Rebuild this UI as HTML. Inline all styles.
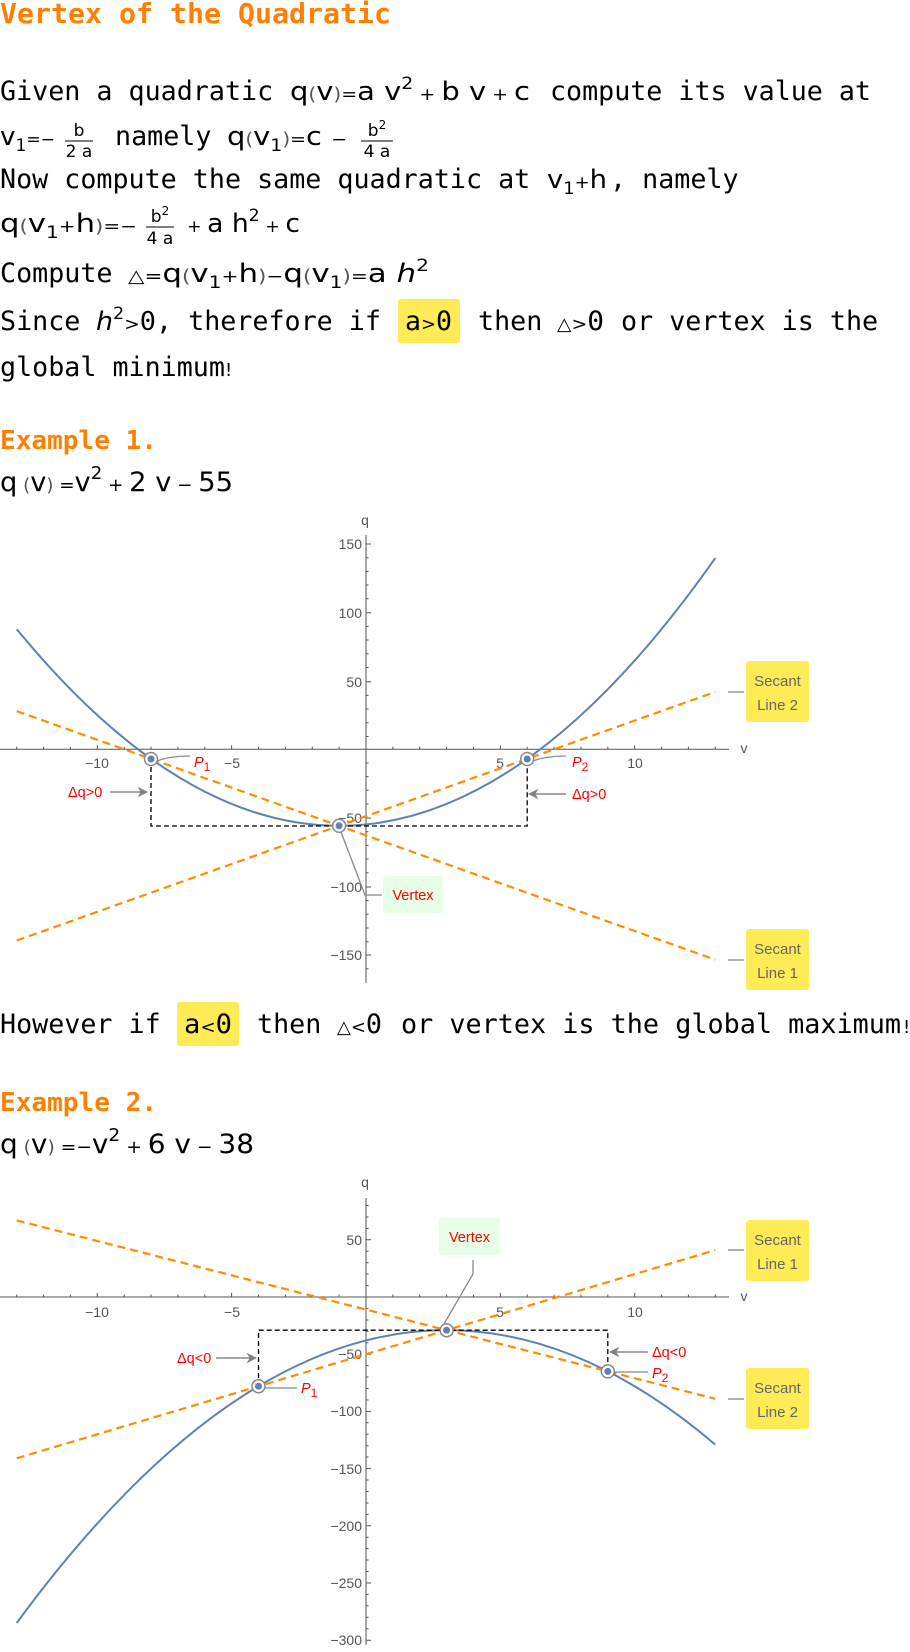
<!DOCTYPE html>
<html><head><meta charset="utf-8"><style>
html,body{margin:0;padding:0;background:#fff;width:910px;height:1652px;overflow:hidden}
svg{display:block}
.m{font-family:"DejaVu Sans Mono","Liberation Mono",monospace;font-size:26.7px;fill:#000}
.s{font-family:"DejaVu Sans","Liberation Sans",sans-serif;fill:#000}
.o{font-family:"DejaVu Sans Mono","Liberation Mono",monospace;font-weight:bold;fill:#ff8000}
.t{font-family:"Liberation Sans","DejaVu Sans",sans-serif;font-size:14px;fill:#555}
.r{font-family:"Liberation Sans","DejaVu Sans",sans-serif;font-size:14.5px;fill:#f00}
.bx{font-family:"Liberation Sans","DejaVu Sans",sans-serif;font-size:15px;fill:#666;text-anchor:middle}
</style></head><body>
<svg width="910" height="1652" viewBox="0 0 910 1652" xmlns="http://www.w3.org/2000/svg">
<defs>
<marker id="ar" viewBox="0 0 10 10" refX="9" refY="5" markerWidth="7" markerHeight="7" orient="auto"><path d="M0,0 L10,5 L0,10 L3,5 z" fill="#808080"/></marker>
</defs>
<!-- Title -->
<text class="o" x="0" y="23" font-size="28" textLength="391" lengthAdjust="spacingAndGlyphs">Vertex of the Quadratic</text>

<!-- line 1 -->
<text class="m" x="0" y="100">Given a quadratic</text>
<text class="s" x="290" y="100" font-size="26" textLength="240" lengthAdjust="spacingAndGlyphs">q<tspan font-size="18" fill="#555">(</tspan>v<tspan font-size="18" fill="#555">)</tspan><tspan font-size="17">=</tspan>a v<tspan font-size="17" dy="-11">2</tspan><tspan font-size="17" dy="11"> + </tspan>b v<tspan font-size="17"> + </tspan>c</text>
<text class="m" x="550" y="100" textLength="321" lengthAdjust="spacingAndGlyphs">compute its value at</text>

<!-- line 2 -->
<text class="s" x="0" y="145" font-size="26" textLength="55" lengthAdjust="spacingAndGlyphs">v<tspan font-size="17" dy="6">1</tspan><tspan font-size="17" dy="-6">=−</tspan></text>
<text class="s" x="79" y="136" font-size="17" text-anchor="middle">b</text>
<line x1="65" y1="141" x2="93" y2="141" stroke="#000" stroke-width="1"/>
<text class="s" x="79" y="157" font-size="17" text-anchor="middle">2 a</text>
<text class="m" x="115" y="145">namely</text>
<text class="s" x="227" y="145" font-size="26" textLength="120" lengthAdjust="spacingAndGlyphs">q<tspan font-size="18" fill="#555">(</tspan>v<tspan font-size="17" dy="6">1</tspan><tspan font-size="18" fill="#555" dy="-6">)</tspan><tspan font-size="17">=</tspan>c <tspan font-size="17">−</tspan></text>
<text class="s" x="377" y="136" font-size="17" text-anchor="middle">b<tspan font-size="12" dy="-7">2</tspan></text>
<line x1="361" y1="141" x2="393" y2="141" stroke="#000" stroke-width="1"/>
<text class="s" x="377" y="157" font-size="17" text-anchor="middle">4 a</text>

<!-- line 3 -->
<text class="m" x="0" y="188">Now compute the same quadratic at</text>
<text class="s" x="547" y="188" font-size="26" textLength="60" lengthAdjust="spacingAndGlyphs">v<tspan font-size="17" dy="6">1</tspan><tspan font-size="17" dy="-6">+</tspan>h</text>
<text class="m" x="610" y="188">, namely</text>

<!-- line 4 -->
<text class="s" x="0" y="232" font-size="26" textLength="137" lengthAdjust="spacingAndGlyphs">q<tspan font-size="18" fill="#555">(</tspan>v<tspan font-size="17" dy="6">1</tspan><tspan font-size="17" dy="-6">+</tspan>h<tspan font-size="18" fill="#555">)</tspan><tspan font-size="17">=−</tspan></text>
<text class="s" x="160" y="222" font-size="17" text-anchor="middle">b<tspan font-size="12" dy="-7">2</tspan></text>
<line x1="146" y1="227" x2="174" y2="227" stroke="#000" stroke-width="1"/>
<text class="s" x="160" y="244" font-size="17" text-anchor="middle">4 a</text>
<text class="s" x="187" y="232" font-size="26" textLength="113" lengthAdjust="spacingAndGlyphs"><tspan font-size="17">+ </tspan>a h<tspan font-size="17" dy="-11">2</tspan><tspan font-size="17" dy="11"> + </tspan>c</text>

<!-- line 5 -->
<text class="m" x="0" y="282">Compute</text>
<text class="s" x="128" y="282" font-size="26" textLength="301" lengthAdjust="spacingAndGlyphs"><tspan font-size="18">△=</tspan>q<tspan font-size="18" fill="#555">(</tspan>v<tspan font-size="17" dy="6">1</tspan><tspan font-size="17" dy="-6">+</tspan>h<tspan font-size="18" fill="#555">)</tspan><tspan font-size="17">−</tspan>q<tspan font-size="18" fill="#555">(</tspan>v<tspan font-size="17" dy="6">1</tspan><tspan font-size="18" fill="#555" dy="-6">)</tspan><tspan font-size="17">=</tspan>a <tspan font-style="italic">h</tspan><tspan font-size="17" dy="-11">2</tspan></text>

<!-- line 6 -->
<text class="m" x="0" y="330">Since</text>
<text class="s" x="96" y="330" font-size="26" textLength="60" lengthAdjust="spacingAndGlyphs"><tspan font-style="italic">h</tspan><tspan font-size="17" dy="-11">2</tspan><tspan font-size="18" dy="11">&gt;</tspan><tspan font-family="DejaVu Sans Mono">0</tspan></text>
<text class="m" x="156" y="330">, therefore if</text>
<rect x="398" y="299" width="62" height="44" rx="3" fill="#ffeb55"/>
<text class="m" x="405" y="330" textLength="47" lengthAdjust="spacingAndGlyphs">a<tspan font-family="DejaVu Sans" font-size="18">&gt;</tspan>0</text>
<text class="m" x="478" y="330">then</text>
<text class="m" x="557" y="330" textLength="47" lengthAdjust="spacingAndGlyphs"><tspan font-family="DejaVu Sans" font-size="18">△&gt;</tspan>0</text>
<text class="m" x="621" y="330">or vertex is the</text>

<!-- line 7 -->
<text class="m" x="0" y="376">global minimum<tspan font-family="DejaVu Sans" font-size="18">!</tspan></text>

<!-- Example 1 -->
<text class="o" x="0" y="449" font-size="26" textLength="157" lengthAdjust="spacingAndGlyphs">Example 1.</text>
<text class="s" x="0" y="491" font-size="27" textLength="233" lengthAdjust="spacingAndGlyphs">q<tspan font-size="18" fill="#555"> (</tspan>v<tspan font-size="18" fill="#555">) </tspan><tspan font-size="18">=</tspan>v<tspan font-size="18" dy="-12">2</tspan><tspan font-size="18" dy="12"> + </tspan>2 v<tspan font-size="18"> − </tspan>55</text>

<!-- PLOT 1 -->
<g stroke="#555" stroke-width="1" fill="none">
<line x1="366" y1="535" x2="366" y2="983"/>
<line x1="0" y1="749.3" x2="729" y2="749.3"/>
<path d="M366,544 h5 M366,612.7 h5 M366,681.7 h5 M366,818 h5 M366,887 h5 M366,955 h5"/>
<path d="M366,557.7 h2.5 M366,571.4 h2.5 M366,585 h2.5 M366,598.8 h2.5 M366,626.4 h2.5 M366,640 h2.5 M366,653.8 h2.5 M366,667.5 h2.5 M366,695.4 h2.5 M366,709 h2.5 M366,722.8 h2.5 M366,736.5 h2.5 M366,763 h2.5 M366,776.6 h2.5 M366,790.3 h2.5 M366,804 h2.5 M366,831.7 h2.5 M366,845.4 h2.5 M366,859 h2.5 M366,872.8 h2.5 M366,900.6 h2.5 M366,914.3 h2.5 M366,928 h2.5 M366,941.7 h2.5 M366,968.7 h2.5"/>
<path d="M97.3,749.3 v-4 M231.6,749.3 v-4 M500.4,749.3 v-4 M634.7,749.3 v-4"/>
<path d="M16.7,749.3 v-2.5 M43.6,749.3 v-2.5 M70.4,749.3 v-2.5 M124.2,749.3 v-2.5 M151,749.3 v-2.5 M177.9,749.3 v-2.5 M204.8,749.3 v-2.5 M258.5,749.3 v-2.5 M285.4,749.3 v-2.5 M312.3,749.3 v-2.5 M339.1,749.3 v-2.5 M392.9,749.3 v-2.5 M419.7,749.3 v-2.5 M446.6,749.3 v-2.5 M473.5,749.3 v-2.5 M527.2,749.3 v-2.5 M554.1,749.3 v-2.5 M581,749.3 v-2.5 M607.8,749.3 v-2.5 M661.6,749.3 v-2.5 M688.4,749.3 v-2.5 M715.3,749.3 v-2.5"/>
</g>
<g class="t">
<text x="362" y="549" text-anchor="end">150</text>
<text x="362" y="618" text-anchor="end">100</text>
<text x="362" y="687" text-anchor="end">50</text>
<text x="362" y="823" text-anchor="end">−50</text>
<text x="362" y="892" text-anchor="end">−100</text>
<text x="362" y="960" text-anchor="end">−150</text>
<text x="97" y="768" text-anchor="middle">−10</text>
<text x="232" y="768" text-anchor="middle">−5</text>
<text x="500" y="768" text-anchor="middle">5</text>
<text x="635" y="768" text-anchor="middle">10</text>
<text x="365" y="525" text-anchor="middle">q</text>
<text x="744" y="753" text-anchor="middle">v</text>
</g>
<path d="M16.7,629.1 Q366,1055.3 715.3,558.1" stroke="#5e81b5" stroke-width="2" fill="none"/>
<g stroke="#ff8c00" stroke-width="2.2" stroke-dasharray="8,5" fill="none">
<line x1="16.7" y1="711.1" x2="715.3" y2="959.7"/>
<line x1="16.7" y1="940.5" x2="715.3" y2="691.9"/>
</g>
<path d="M151,759 V826 H527.2 V759" stroke="#000" stroke-width="1.3" stroke-dasharray="5,3" fill="none"/>
<g stroke="#888" stroke-width="1.3" fill="none">
<path d="M157,761 Q170,756 190,756"/>
<path d="M533,761 Q546,756 566,756"/>
<path d="M341,832 L365,895 H382"/>
<line x1="110" y1="792" x2="147" y2="792" marker-end="url(#ar)" stroke-width="1.5"/>
<line x1="566" y1="794" x2="529" y2="794" marker-end="url(#ar)" stroke-width="1.5"/>
<line x1="728" y1="692" x2="744" y2="692"/>
<line x1="728" y1="960" x2="744" y2="960"/>
</g>
<g fill="#fff" stroke="#888" stroke-width="1.5">
<circle cx="151" cy="759" r="6.5"/><circle cx="527.2" cy="759" r="6.5"/><circle cx="339.1" cy="825.8" r="6.5"/>
</g>
<g fill="#5e81b5"><circle cx="151" cy="759" r="3.5"/><circle cx="527.2" cy="759" r="3.5"/><circle cx="339.1" cy="825.8" r="3.5"/></g>
<text class="r" x="194" y="767" font-style="italic" font-size="16">P<tspan font-size="12" dy="4" font-style="normal">1</tspan></text>
<text class="r" x="572" y="767" font-style="italic" font-size="16">P<tspan font-size="12" dy="4" font-style="normal">2</tspan></text>
<text class="r" x="68" y="797">Δq&gt;0</text>
<text class="r" x="572" y="799">Δq&gt;0</text>
<rect x="383" y="876" width="60" height="37" rx="3" fill="#e6ffe6"/>
<text class="r" x="413" y="900" text-anchor="middle">Vertex</text>
<rect x="746" y="661" width="63" height="61" rx="3" fill="#ffeb55"/>
<text class="bx" x="777.5" y="686">Secant</text><text class="bx" x="777.5" y="710">Line 2</text>
<rect x="746" y="929" width="63" height="61" rx="3" fill="#ffeb55"/>
<text class="bx" x="777.5" y="954">Secant</text><text class="bx" x="777.5" y="978">Line 1</text>

<!-- However -->
<text class="m" x="0" y="1033">However if</text>
<rect x="177" y="1002" width="62" height="44" rx="3" fill="#ffeb55"/>
<text class="m" x="184" y="1033" textLength="48" lengthAdjust="spacingAndGlyphs">a<tspan font-family="DejaVu Sans" font-size="18">&lt;</tspan>0</text>
<text class="m" x="257" y="1033">then</text>
<text class="m" x="337" y="1033" textLength="45" lengthAdjust="spacingAndGlyphs"><tspan font-family="DejaVu Sans" font-size="18">△&lt;</tspan>0</text>
<text class="m" x="401" y="1033" textLength="500" lengthAdjust="spacingAndGlyphs">or vertex is the global maximum</text>
<text class="s" x="903" y="1033" font-size="18">!</text>

<!-- Example 2 -->
<text class="o" x="0" y="1111" font-size="26" textLength="157" lengthAdjust="spacingAndGlyphs">Example 2.</text>
<text class="s" x="0" y="1153" font-size="27" textLength="254" lengthAdjust="spacingAndGlyphs">q<tspan font-size="18" fill="#555"> (</tspan>v<tspan font-size="18" fill="#555">) </tspan><tspan font-size="18">=−</tspan>v<tspan font-size="18" dy="-12">2</tspan><tspan font-size="18" dy="12"> + </tspan>6 v<tspan font-size="18"> − </tspan>38</text>

<!-- PLOT 2 -->
<g stroke="#555" stroke-width="1" fill="none">
<line x1="366" y1="1198" x2="366" y2="1645"/>
<line x1="0" y1="1297" x2="729" y2="1297"/>
<path d="M366,1239.8 h5 M366,1354.2 h5 M366,1411.4 h5 M366,1468.6 h5 M366,1525.8 h5 M366,1583 h5 M366,1640.2 h5"/>
<path d="M366,1205.5 h2.5 M366,1217 h2.5 M366,1228.4 h2.5 M366,1251.2 h2.5 M366,1262.7 h2.5 M366,1274 h2.5 M366,1285.6 h2.5 M366,1308.4 h2.5 M366,1320 h2.5 M366,1331.3 h2.5 M366,1342.8 h2.5 M366,1365.6 h2.5 M366,1377 h2.5 M366,1388.5 h2.5 M366,1400 h2.5 M366,1422.8 h2.5 M366,1434.3 h2.5 M366,1445.7 h2.5 M366,1457 h2.5 M366,1480 h2.5 M366,1491.5 h2.5 M366,1503 h2.5 M366,1514.4 h2.5 M366,1537.2 h2.5 M366,1548.6 h2.5 M366,1560 h2.5 M366,1571.5 h2.5 M366,1594.4 h2.5 M366,1605.8 h2.5 M366,1617.3 h2.5 M366,1628.7 h2.5"/>
<path d="M97.3,1297 v-4 M231.6,1297 v-4 M500.4,1297 v-4 M634.7,1297 v-4"/>
<path d="M16.7,1297 v-2.5 M43.6,1297 v-2.5 M70.4,1297 v-2.5 M124.2,1297 v-2.5 M151,1297 v-2.5 M177.9,1297 v-2.5 M204.8,1297 v-2.5 M258.5,1297 v-2.5 M285.4,1297 v-2.5 M312.3,1297 v-2.5 M339.1,1297 v-2.5 M392.9,1297 v-2.5 M419.7,1297 v-2.5 M446.6,1297 v-2.5 M473.5,1297 v-2.5 M527.2,1297 v-2.5 M554.1,1297 v-2.5 M581,1297 v-2.5 M607.8,1297 v-2.5 M661.6,1297 v-2.5 M688.4,1297 v-2.5 M715.3,1297 v-2.5"/>
</g>
<g class="t">
<text x="362" y="1245" text-anchor="end">50</text>
<text x="362" y="1359" text-anchor="end">−50</text>
<text x="362" y="1416" text-anchor="end">−100</text>
<text x="362" y="1474" text-anchor="end">−150</text>
<text x="362" y="1531" text-anchor="end">−200</text>
<text x="362" y="1588" text-anchor="end">−250</text>
<text x="362" y="1645" text-anchor="end">−300</text>
<text x="97" y="1317" text-anchor="middle">−10</text>
<text x="232" y="1317" text-anchor="middle">−5</text>
<text x="500" y="1317" text-anchor="middle">5</text>
<text x="635" y="1317" text-anchor="middle">10</text>
<text x="365" y="1187" text-anchor="middle">q</text>
<text x="744" y="1301" text-anchor="middle">v</text>
</g>
<path d="M16.7,1623 Q366,1147.1 715.3,1444.6" stroke="#5e81b5" stroke-width="2" fill="none"/>
<g stroke="#ff8c00" stroke-width="2.2" stroke-dasharray="8,5" fill="none">
<line x1="16.7" y1="1458.3" x2="715.3" y2="1250.1"/>
<line x1="16.7" y1="1220.4" x2="715.3" y2="1398.8"/>
</g>
<path d="M258.5,1386 V1330.2 H607.8 V1371" stroke="#000" stroke-width="1.3" stroke-dasharray="5,3" fill="none"/>
<g stroke="#888" stroke-width="1.3" fill="none">
<path d="M265,1388 H297"/>
<path d="M614,1372 H648"/>
<path d="M444,1324 L473,1274 V1260"/>
<line x1="216" y1="1358" x2="256" y2="1358" marker-end="url(#ar)" stroke-width="1.5"/>
<line x1="648" y1="1352" x2="610" y2="1352" marker-end="url(#ar)" stroke-width="1.5"/>
<line x1="728" y1="1250" x2="744" y2="1250"/>
<line x1="728" y1="1399" x2="744" y2="1399"/>
</g>
<g fill="#fff" stroke="#888" stroke-width="1.5">
<circle cx="258.5" cy="1386.2" r="6.5"/><circle cx="607.8" cy="1371.4" r="6.5"/><circle cx="446.6" cy="1330.2" r="6.5"/>
</g>
<g fill="#5e81b5"><circle cx="258.5" cy="1386.2" r="3.5"/><circle cx="607.8" cy="1371.4" r="3.5"/><circle cx="446.6" cy="1330.2" r="3.5"/></g>
<text class="r" x="301" y="1393" font-style="italic" font-size="16">P<tspan font-size="12" dy="4" font-style="normal">1</tspan></text>
<text class="r" x="652" y="1378" font-style="italic" font-size="16">P<tspan font-size="12" dy="4" font-style="normal">2</tspan></text>
<text class="r" x="177" y="1363">Δq&lt;0</text>
<text class="r" x="652" y="1357">Δq&lt;0</text>
<rect x="439" y="1218" width="61" height="37" rx="3" fill="#e6ffe6"/>
<text class="r" x="469.5" y="1242" text-anchor="middle">Vertex</text>
<rect x="746" y="1220" width="63" height="61" rx="3" fill="#ffeb55"/>
<text class="bx" x="777.5" y="1245">Secant</text><text class="bx" x="777.5" y="1269">Line 1</text>
<rect x="746" y="1368" width="63" height="61" rx="3" fill="#ffeb55"/>
<text class="bx" x="777.5" y="1393">Secant</text><text class="bx" x="777.5" y="1417">Line 2</text>
</svg>
</body></html>
